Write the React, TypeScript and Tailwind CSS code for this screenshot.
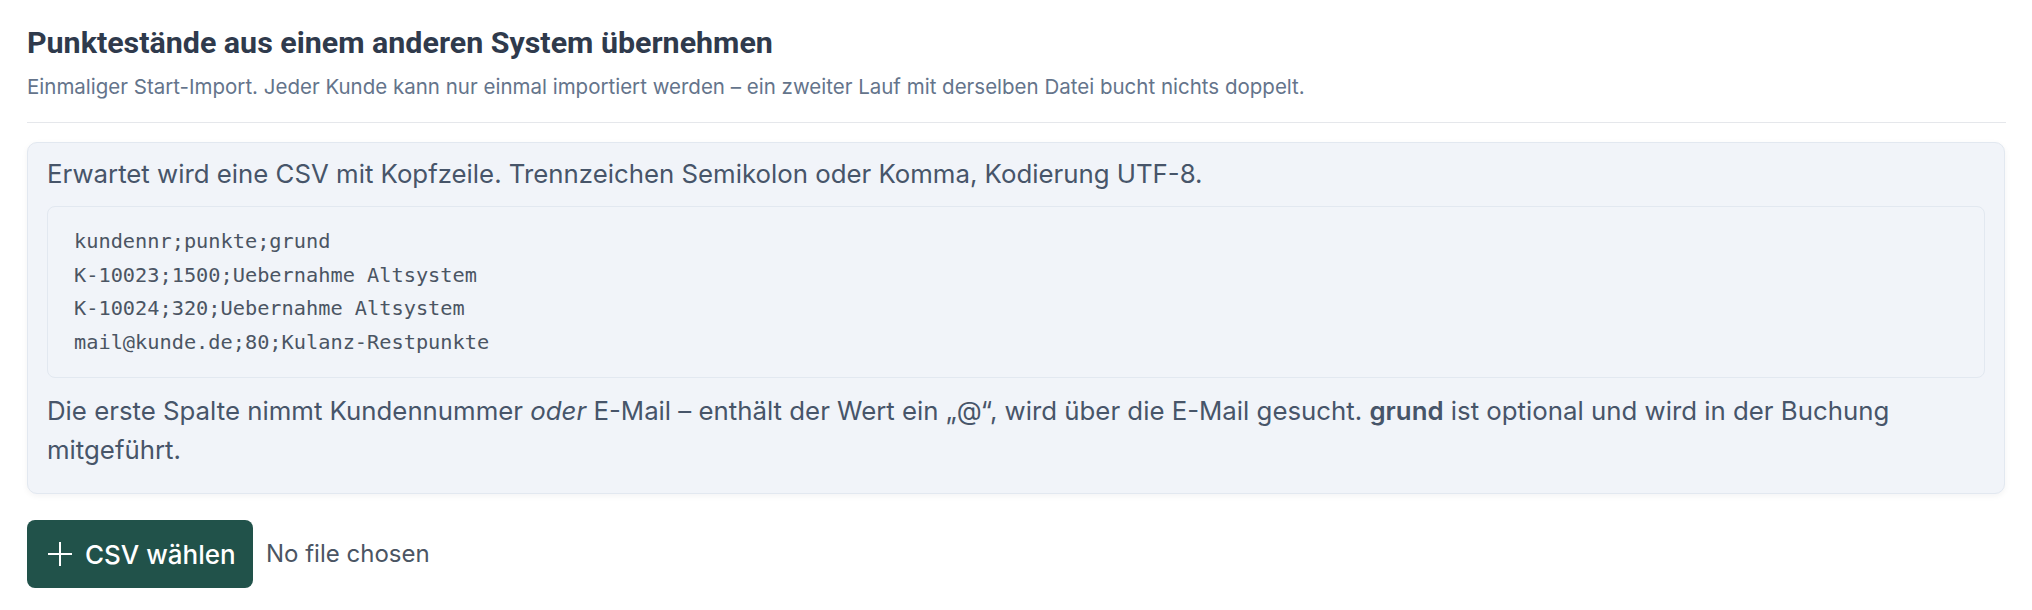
const sampleRows = [
  "kundennr;punkte;grund",
  "K-10023;1500;Uebernahme Altsystem",
  "K-10024;320;Uebernahme Altsystem",
  "mail@kunde.de;80;Kulanz-Restpunkte",
];

export default function App() {
  return (
    <div className="min-h-screen bg-white px-[27px] pt-[25px] font-['Inter',sans-serif] text-[#475569]">
      {/* Header */}
      <h2 className="font-['Roboto',sans-serif] text-[30.4px] leading-[36px] font-bold text-[#2f3a4c]">
        Punktestände aus einem anderen System übernehmen
      </h2>
      <p className="mt-[13px] text-[20.5px] leading-[26px] text-[#64748b]">
        Einmaliger Start-Import. Jeder Kunde kann nur einmal importiert werden – ein zweiter Lauf mit derselben Datei bucht nichts doppelt.
      </p>
      <div className="mt-[22px] mr-[-1px] h-px bg-[#e5e7eb]" />

      {/* Format hint */}
      <div className="mt-[19px] rounded-[10px] border border-[#e2e8f0] bg-[#f1f4f9] px-[19px] pt-[13px] pb-[24px] shadow-[0_2px_6px_rgba(15,23,42,0.05)]">
        <p className="text-[25.8px] leading-[36px]">
          Erwartet wird eine CSV mit Kopfzeile. Trennzeichen Semikolon oder Komma, Kodierung UTF-8.
        </p>
        <pre className="mt-[14px] rounded-[8px] border border-[#e2e8f0] bg-[#f1f4f9] px-[26px] py-[18px] font-['DejaVu_Sans_Mono',monospace] text-[20.3px] leading-[33.5px] text-[#4b5563]">
          {sampleRows.join("\n")}
        </pre>
        <p className="mt-[13px] text-[25.8px] leading-[39px]">
          Die erste Spalte nimmt Kundennummer <em>oder</em> E-Mail – enthält der Wert ein „@“, wird über die E-Mail gesucht.{" "}
          <strong className="font-semibold">grund</strong> ist optional und wird in der Buchung mitgeführt.
        </p>
      </div>

      {/* File picker */}
      <div className="mt-[26px] flex items-center gap-[13px]">
        <button className="flex h-[68px] w-[226px] items-center gap-[12px] rounded-[8px] bg-[#21524a] pl-[20px] text-[26px] font-medium text-white">
          <svg width="26" height="26" viewBox="0 0 26 26" fill="none" stroke="currentColor" strokeWidth={2}>
            <path d="M13 1v24M1 13h24" />
          </svg>
          CSV wählen
        </button>
        <span className="text-[24px] text-[#4b5563]">No file chosen</span>
      </div>
    </div>
  );
}
